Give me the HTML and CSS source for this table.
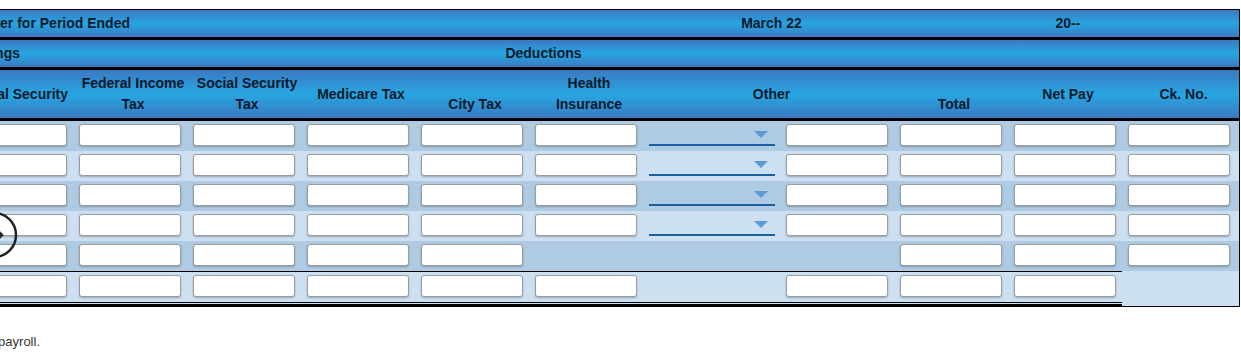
FILE: index.html
```html
<!DOCTYPE html>
<html lang="en">
<head>
<meta charset="utf-8">
<title>Payroll Register</title>
<link rel="stylesheet" href="styles.css">
</head>
<body>
<div class="page">
  <div class="register">
    <div class="hd">
      <div class="h left span6"><div class="clip clip-title">Payroll Register for Period Ended</div></div>
      <div class="h span2">March 22</div>
      <div class="h"></div>
      <div class="h">20--</div>
      <div class="h"></div>
    </div>
    <div class="hd">
      <div class="h left"><div class="clip clip-earn">Earnings</div></div>
      <div class="h span8">Deductions</div>
      <div class="h"></div>
      <div class="h"></div>
    </div>
    <div class="hd cols">
      <div class="h left"><div class="clip clip-ss">Social Security</div></div>
      <div class="h">Federal Income<br>Tax</div>
      <div class="h">Social Security<br>Tax</div>
      <div class="h">Medicare Tax</div>
      <div class="h bottom">City Tax</div>
      <div class="h">Health<br>Insurance</div>
      <div class="h span2">Other</div>
      <div class="h bottom">Total</div>
      <div class="h">Net Pay</div>
      <div class="h">Ck. No.</div>
    </div>

    <div class="row odd">
      <div class="d first"><input class="f" type="text"></div>
      <div class="d"><input class="f" type="text"></div>
      <div class="d"><input class="f" type="text"></div>
      <div class="d"><input class="f" type="text"></div>
      <div class="d"><input class="f" type="text"></div>
      <div class="d"><input class="f" type="text"></div>
      <div class="d sel"><div class="select"><svg width="14" height="7" viewBox="0 0 14 7"><polygon points="0,0 14,0 7,7" fill="#5b9bd5"/></svg></div></div>
      <div class="d"><input class="f" type="text"></div>
      <div class="d"><input class="f" type="text"></div>
      <div class="d"><input class="f" type="text"></div>
      <div class="d"><input class="f" type="text"></div>
    </div>
    <div class="row even">
      <div class="d first"><input class="f" type="text"></div>
      <div class="d"><input class="f" type="text"></div>
      <div class="d"><input class="f" type="text"></div>
      <div class="d"><input class="f" type="text"></div>
      <div class="d"><input class="f" type="text"></div>
      <div class="d"><input class="f" type="text"></div>
      <div class="d sel"><div class="select"><svg width="14" height="7" viewBox="0 0 14 7"><polygon points="0,0 14,0 7,7" fill="#5b9bd5"/></svg></div></div>
      <div class="d"><input class="f" type="text"></div>
      <div class="d"><input class="f" type="text"></div>
      <div class="d"><input class="f" type="text"></div>
      <div class="d"><input class="f" type="text"></div>
    </div>
    <div class="row odd">
      <div class="d first"><input class="f" type="text"></div>
      <div class="d"><input class="f" type="text"></div>
      <div class="d"><input class="f" type="text"></div>
      <div class="d"><input class="f" type="text"></div>
      <div class="d"><input class="f" type="text"></div>
      <div class="d"><input class="f" type="text"></div>
      <div class="d sel"><div class="select"><svg width="14" height="7" viewBox="0 0 14 7"><polygon points="0,0 14,0 7,7" fill="#5b9bd5"/></svg></div></div>
      <div class="d"><input class="f" type="text"></div>
      <div class="d"><input class="f" type="text"></div>
      <div class="d"><input class="f" type="text"></div>
      <div class="d"><input class="f" type="text"></div>
    </div>
    <div class="row even">
      <div class="d first"><input class="f" type="text"></div>
      <div class="d"><input class="f" type="text"></div>
      <div class="d"><input class="f" type="text"></div>
      <div class="d"><input class="f" type="text"></div>
      <div class="d"><input class="f" type="text"></div>
      <div class="d"><input class="f" type="text"></div>
      <div class="d sel"><div class="select"><svg width="14" height="7" viewBox="0 0 14 7"><polygon points="0,0 14,0 7,7" fill="#5b9bd5"/></svg></div></div>
      <div class="d"><input class="f" type="text"></div>
      <div class="d"><input class="f" type="text"></div>
      <div class="d"><input class="f" type="text"></div>
      <div class="d"><input class="f" type="text"></div>
    </div>
    <div class="row odd">
      <div class="d first"><input class="f" type="text"></div>
      <div class="d"><input class="f" type="text"></div>
      <div class="d"><input class="f" type="text"></div>
      <div class="d"><input class="f" type="text"></div>
      <div class="d"><input class="f" type="text"></div>
      <div class="d"></div>
      <div class="d"></div>
      <div class="d"></div>
      <div class="d"><input class="f" type="text"></div>
      <div class="d"><input class="f" type="text"></div>
      <div class="d"><input class="f" type="text"></div>
    </div>
    <div class="row even total">
      <div class="d first"><input class="f" type="text"></div>
      <div class="d"><input class="f" type="text"></div>
      <div class="d"><input class="f" type="text"></div>
      <div class="d"><input class="f" type="text"></div>
      <div class="d"><input class="f" type="text"></div>
      <div class="d"><input class="f" type="text"></div>
      <div class="d"></div>
      <div class="d"><input class="f" type="text"></div>
      <div class="d"><input class="f" type="text"></div>
      <div class="d"><input class="f" type="text"></div>
      <div class="d last"></div>
    </div>
  </div>

  <p class="note">Complete the payroll.</p>

  <svg class="nav" width="48" height="48" viewBox="0 0 48 48">
    <circle cx="24" cy="24" r="22" fill="none" stroke="#222" stroke-width="2.5"/>
    <polyline points="25,17 32,24 25,31" fill="none" stroke="#222" stroke-width="2.5"/>
  </svg>
</div>
</body>
</html>
```

FILE: styles.css
```css
* { box-sizing: border-box; }

body {
  margin: 0;
  background: #fff;
  font-family: "Liberation Sans", Arial, sans-serif;
  overflow: hidden;
}

.page {
  position: relative;
  width: 1241px;
  height: 352px;
  padding-top: 9px;
  overflow: hidden;
}

.register {
  display: grid;
  grid-template-columns: 73px repeat(5, 114px) 137px repeat(3, 114px) 117px;
  grid-template-rows: 30px 30px 51px repeat(5, 30px) 36px;
  width: 1240px;
  border-top: 1px solid #000;
  border-right: 1px solid #000;
}

.hd, .row { display: contents; }

.h {
  display: flex;
  align-items: center;
  justify-content: center;
  padding-left: 6px;
  background: linear-gradient(#3b79c2, #27a6e1 50%, #3b79c2);
  border-bottom: 3px solid #000;
  color: #061a2c;
  font-size: 14px;
  font-weight: bold;
  line-height: 21px;
  text-align: center;
  white-space: nowrap;
}

.h.left { justify-content: flex-start; padding-left: 0; }
.h.bottom { align-items: flex-end; padding-bottom: 3px; }
.span2 { grid-column: span 2; }
.span6 { grid-column: span 6; }
.span8 { grid-column: span 8; }

.cols .h { padding-top: 3px; padding-bottom: 3px; }
.cols .h.bottom { padding-bottom: 3px; }

.clip {
  display: flex;
  justify-content: flex-end;
  overflow: hidden;
  white-space: nowrap;
}
.clip-title { width: 130px; }
.clip-earn { width: 20px; }
.clip-ss { width: 68px; }

.d {
  display: flex;
  align-items: flex-start;
  padding: 3px 6px 0;
}
.d.first { justify-content: flex-end; overflow: hidden; }
.odd > .d { background: #aecbe3; }
.even > .d { background: #cce0f1; }

.f {
  flex: none;
  width: 102px;
  height: 22px;
  margin: 0;
  padding: 0 4px;
  border: 1px solid #9c9c9c;
  border-radius: 3px;
  background: #fff;
  box-shadow: 0 1px 2px rgba(0, 0, 0, 0.25);
  font: inherit;
  font-size: 13px;
}

.d.sel { padding: 3px 5px 0 6px; }

.select {
  display: flex;
  align-items: center;
  justify-content: flex-end;
  width: 126px;
  height: 22px;
  padding-right: 7px;
  border-bottom: 2px solid #1a5f9f;
}

.total > .d {
  border-top: 1px solid #000;
  border-bottom: 3px solid #000;
  background: linear-gradient(#cce0f1 30px, #000 30px 31px, #cce0f1 31px);
}
.total > .d.last {
  border-top: 0;
  border-bottom: 1px solid #000;
  background: #cce0f1;
}

.note {
  display: flex;
  justify-content: flex-end;
  width: 40px;
  margin: 27px 0 0;
  overflow: hidden;
  white-space: nowrap;
  color: #333;
  font-size: 13px;
}

.nav {
  position: absolute;
  left: -30px;
  top: 211px;
}
```
